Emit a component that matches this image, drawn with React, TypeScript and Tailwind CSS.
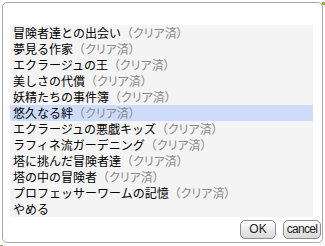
import React from 'react';

const ITEMS: { title: string; cleared: boolean }[] = [
  { title: '冒険者達との出会い', cleared: true },
  { title: '夢見る作家', cleared: true },
  { title: 'エクラージュの王', cleared: true },
  { title: '美しさの代償', cleared: true },
  { title: '妖精たちの事件簿', cleared: true },
  { title: '悠久なる絆', cleared: true },
  { title: 'エクラージュの悪戯キッズ', cleared: true },
  { title: 'ラフィネ流ガーデニング', cleared: true },
  { title: '塔に挑んだ冒険者達', cleared: true },
  { title: '塔の中の冒険者', cleared: true },
  { title: 'プロフェッサーワームの記憶', cleared: true },
  { title: 'やめる', cleared: false },
];

const SELECTED = 5;

export default function App() {
  return (
    <div className="relative w-[325px] h-[246px] bg-white font-['Noto_Sans_CJK_JP',sans-serif] text-[12px]">
      <div className="absolute left-[322px] top-0 w-[3px] h-[3px] bg-[#9aa84a]" />
      <div className="absolute left-0 top-[243px] w-[3px] h-[3px] bg-[#9aa84a]" />
      <div className="ml-[2px] mt-[2px] w-[321px] h-[241px] border border-[#a8a8a8] rounded-[5px] flex flex-col pt-[22px] px-[7px]">
        <ul className="w-[303px] bg-[#f4f4f4]">
          {ITEMS.map((it, i) => (
            <li
              key={it.title}
              className={`h-[16px] leading-[16px] pl-[3px] whitespace-nowrap text-black ${i === SELECTED ? 'bg-[#cddcfa]' : ''}`}
            >
              {it.title}
              {it.cleared && (
                <span className="text-[#8a8a8a]">
                  （<span className="[font-feature-settings:'palt']">クリア済）</span>
                </span>
              )}
            </li>
          ))}
        </ul>
        <div className="flex justify-end gap-[7px] mt-[3px] -mr-[6px]">
          <button className="w-[36px] h-[19px] p-0 rounded-[5px] border border-[#8c8c8c] bg-gradient-to-b from-white to-[#d8d8d8] font-['Liberation_Sans',sans-serif] text-[12px] leading-[17px] text-[#222]">
            OK
          </button>
          <button className="w-[38px] h-[19px] p-0 rounded-[5px] border border-[#8c8c8c] bg-gradient-to-b from-white to-[#d8d8d8] font-['Liberation_Sans',sans-serif] text-[12px] tracking-[-0.7px] leading-[17px] text-[#222]">
            cancel
          </button>
        </div>
      </div>
    </div>
  );
}
